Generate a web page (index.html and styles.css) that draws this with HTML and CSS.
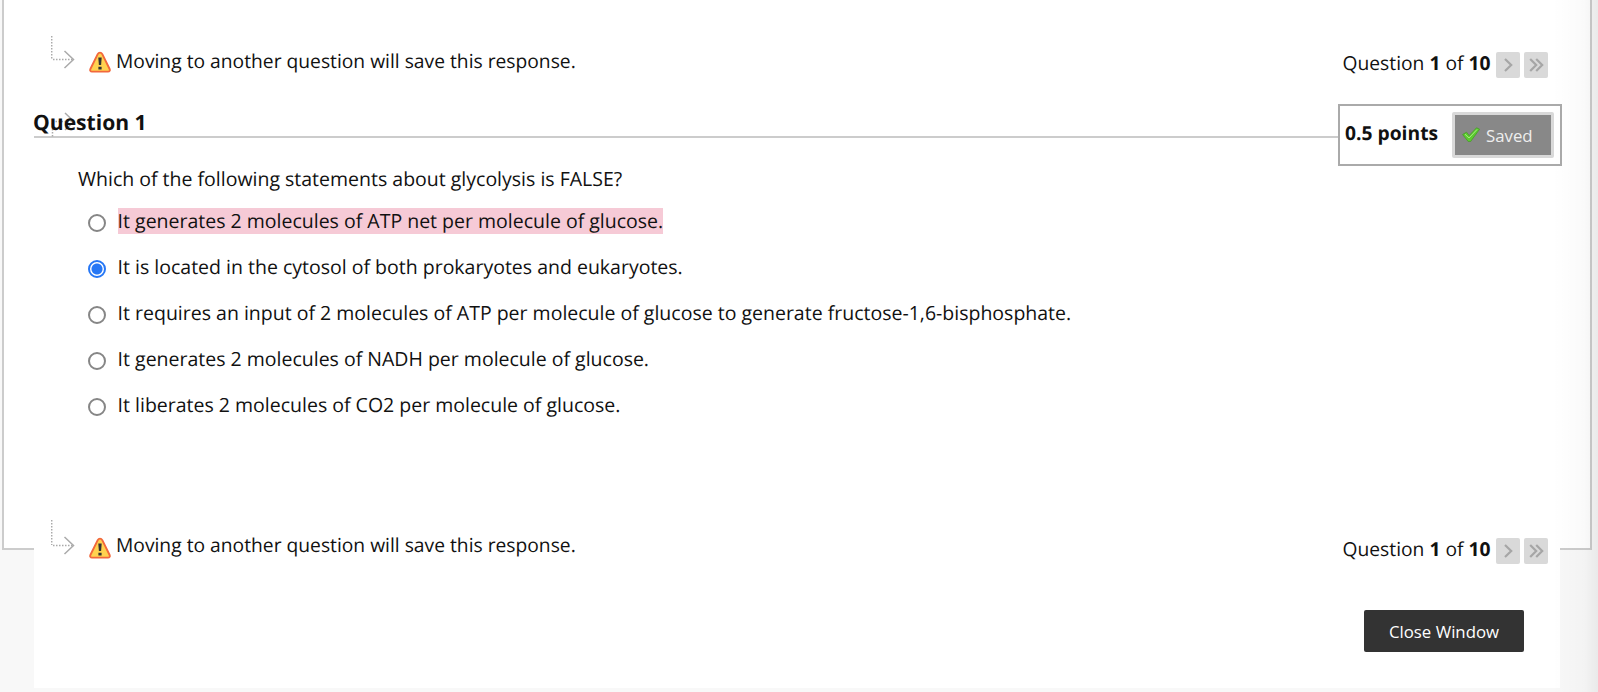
FILE: index.html
```
<!DOCTYPE html>
<html lang="en">
<head>
<meta charset="UTF-8">
<meta name="viewport" content="width=device-width, initial-scale=1.0">
<title>Take Test</title>
<link rel="stylesheet" href="styles.css">
</head>
<body>

<div class="content-box">
  <div class="test-panel">

    <div class="save-bar">
      <svg class="steps-arrow" width="24" height="34" viewBox="0 0 24 34">
        <path class="dots" d="M.7 0V23.5M2 23.5H22"/>
        <path class="head" d="M13.5 15L22.5 23.5L13.5 32"/>
      </svg>
      <svg class="warning-icon" width="22" height="22" viewBox="0 0 22 22">
        <path d="M11 1.6C12 1.6 12.8 2.2 13.3 3.1L20.6 18C21.2 19.5 20.6 20.6 19 20.6H3C1.4 20.6 .8 19.5 1.4 18L8.7 3.1C9.2 2.2 10 1.6 11 1.6Z" fill="#ffd24f" stroke="#f2683c" stroke-width="1.9"/>
        <path d="M9.3 6.5H12.7L12.1 14H9.9ZM9.4 15.8H12.6V18.6H9.4Z" fill="#333"/>
      </svg>
      <span class="save-text">Moving to another question will save this response.</span>
      <div class="question-nav">
        <span>Question <strong>1</strong> of <strong>10</strong></span>
        <button class="nav-button" aria-label="Next Question"><svg width="24" height="26" viewBox="0 0 24 26"><path d="M9 7L15.2 13L9 19"/></svg></button>
        <button class="nav-button" aria-label="Last Question"><svg width="24" height="26" viewBox="0 0 24 26"><path d="M6.2 7L12.2 13L6.2 19M12.2 7L18.2 13L12.2 19"/></svg></button>
      </div>
    </div>

    <div class="question-header">
      <div class="question-title">
        <svg class="title-arrow" width="24" height="26" viewBox="0 0 24 26">
          <path class="dots" d="M1.5 9.5H22M1.5 11V25"/>
          <path class="head" d="M14 1L23 9.5L14 18"/>
        </svg>
        <h3>Question 1</h3>
      </div>
      <div class="points-box">
        <span class="points">0.5 points</span>
        <button class="saved-button">
          <svg width="18" height="16" viewBox="0 0 18 16">
            <path d="M.6 7.5L4.5 5.2L7.2 8.6L14.5 .8L17.6 2.2L8.6 14.5H6.2Z" fill="#5ccb30" stroke="#479a2a" stroke-width=".8"/>
            <path d="M3 7.2L7 11L15 2.5" fill="none" stroke="#a5ee7e"/>
          </svg>
          Saved
        </button>
      </div>
    </div>

    <div class="question-body">
      <p class="question-text">Which of the following statements about glycolysis is FALSE?</p>
      <label class="answer"><input type="radio" name="answer"><span class="highlight">It generates 2 molecules of ATP net per molecule of glucose.</span></label>
      <label class="answer"><input type="radio" name="answer" checked><span>It is located in the cytosol of both prokaryotes and eukaryotes.</span></label>
      <label class="answer"><input type="radio" name="answer"><span>It requires an input of 2 molecules of ATP per molecule of glucose to generate fructose-1,6-bisphosphate.</span></label>
      <label class="answer"><input type="radio" name="answer"><span>It generates 2 molecules of NADH per molecule of glucose.</span></label>
      <label class="answer"><input type="radio" name="answer"><span>It liberates 2 molecules of CO2 per molecule of glucose.</span></label>
    </div>

    <div class="save-bar save-bar-bottom">
      <svg class="steps-arrow" width="24" height="36" viewBox="0 0 24 36">
        <path class="dots" d="M.7 0V25M2 25.5H22"/>
        <path class="head" d="M13.5 17L22.5 25.5L13.5 34"/>
      </svg>
      <svg class="warning-icon" width="22" height="22" viewBox="0 0 22 22">
        <path d="M11 1.6C12 1.6 12.8 2.2 13.3 3.1L20.6 18C21.2 19.5 20.6 20.6 19 20.6H3C1.4 20.6 .8 19.5 1.4 18L8.7 3.1C9.2 2.2 10 1.6 11 1.6Z" fill="#ffd24f" stroke="#f2683c" stroke-width="1.9"/>
        <path d="M9.3 6.5H12.7L12.1 14H9.9ZM9.4 15.8H12.6V18.6H9.4Z" fill="#333"/>
      </svg>
      <span class="save-text">Moving to another question will save this response.</span>
      <div class="question-nav">
        <span>Question <strong>1</strong> of <strong>10</strong></span>
        <button class="nav-button" aria-label="Next Question"><svg width="24" height="26" viewBox="0 0 24 26"><path d="M9 7L15.2 13L9 19"/></svg></button>
        <button class="nav-button" aria-label="Last Question"><svg width="24" height="26" viewBox="0 0 24 26"><path d="M6.2 7L12.2 13L6.2 19M12.2 7L18.2 13L12.2 19"/></svg></button>
      </div>
    </div>

    <div class="panel-footer">
      <button class="close-button">Close Window</button>
    </div>

  </div>
</div>
<div class="edge-shadow"></div>

</body>
</html>
```
FILE: styles.css
```
/* --- Page --- */
* {
  box-sizing: border-box;
}

body {
  margin: 0;
  height: 692px;
  overflow: hidden;
  background-color: #f8f8f8;
  color: #111;
  font-family: "Open Sans", "Noto Sans", sans-serif;
  font-size: 19.5px;
  line-height: 26px;
  text-rendering: geometricPrecision;
}

button {
  font-family: inherit;
  margin: 0;
  padding: 0;
  border: none;
}

/* --- Bordered box, the panel runs out of its bottom edge --- */
.content-box {
  width: 1590px;
  height: 550px;
  margin-left: 2px;
  padding-left: 30px;
  background-color: #fff;
  border: 2px solid #ccc;
  border-top: none;
}

.test-panel {
  width: 1526px;
  height: 688px;
  padding-top: 36px;
  background-color: #fff;
}

/* --- Save notice + question navigation --- */
.save-bar {
  display: flex;
  align-items: flex-start;
  height: 68px;
  padding: 0 12px 0 17px;
  font-size: 19.25px;
}

.save-bar svg {
  display: block;
  flex: none;
}

.dots,
.head {
  fill: none;
  stroke: #aaa;
  stroke-width: 1.5;
}

.dots {
  stroke-dasharray: 1.5 1.5;
}

.warning-icon {
  margin: 15px 5px 0 14px;
}

.save-text {
  margin-top: 12px;
}

.question-nav {
  display: flex;
  align-items: flex-start;
  margin-left: auto;
  padding-top: 16px;
  gap: 4px;
}

.question-nav span {
  margin: -2px 1.5px 0 0;
}

.nav-button {
  width: 24px;
  height: 26px;
  background-color: #d9d9d9;
  border-radius: 2px;
}

.nav-button path {
  fill: none;
  stroke: #a6a6a6;
  stroke-width: 2.2;
}

/* --- Question header --- */
.question-header {
  display: flex;
  align-items: flex-start;
  height: 62px;
  margin-right: -2px;
}

.question-title {
  position: relative;
  flex: 1;
  height: 34px;
  border-bottom: 2px solid #ccc;
}

.question-title h3 {
  position: relative;
  margin: 6px 0 0 -1px;
  font-size: 21.1px;
  font-weight: 700;
}

.title-arrow {
  position: absolute;
  left: 17px;
  top: 8px;
}

.points-box {
  display: flex;
  align-items: center;
  justify-content: space-between;
  width: 224px;
  height: 62px;
  padding: 0 6px 0 5px;
  background-color: #fff;
  border: 2px solid #aaa;
}

.points {
  font-size: 19.25px;
  font-weight: 700;
  margin-top: -4px;
}

.saved-button {
  display: flex;
  align-items: center;
  width: 102px;
  height: 46px;
  padding-left: 7px;
  gap: 6px;
  background-color: #888;
  border: 3px solid #d9d9d9;
  border-radius: 2px;
  color: #eee;
  font-size: 16.8px;
}

/* --- Question and answers --- */
.question-body {
  height: 354px;
  padding: 0 0 0 44px;
}

.question-text {
  margin: 0;
}

.answer {
  display: flex;
  align-items: flex-start;
  height: 26px;
  margin: 16px 0 20px 10px;
}

.answer + .answer {
  margin-top: 0;
}

.answer input {
  appearance: none;
  width: 18px;
  height: 18px;
  margin: 6px 11.6px 0 0;
  border: 2px solid #868686;
  border-radius: 50%;
}

.answer input:checked {
  border-color: #2677f5;
  background: radial-gradient(circle, #2677f5 5px, #fff 6px);
}

.highlight {
  background-color: #f6cad6;
}

/* --- Bottom --- */
.save-bar-bottom {
  height: 90px;
}

.save-bar-bottom .warning-icon {
  margin-top: 17px;
}

.save-bar-bottom .question-nav {
  padding-top: 18px;
}

.panel-footer {
  display: flex;
  justify-content: flex-end;
  padding-right: 36px;
}

.close-button {
  width: 160px;
  height: 42px;
  background-color: #333;
  border-radius: 2px;
  color: #fff;
  font-size: 16.8px;
}

/* --- Soft shade down the right side of the window --- */
.edge-shadow {
  position: absolute;
  top: 0;
  right: 0;
  width: 46px;
  height: 692px;
  background: linear-gradient(to right, rgba(0, 0, 0, 0), rgba(0, 0, 0, 0.02) 70%, rgba(0, 0, 0, 0.06));
  pointer-events: none;
}
```
